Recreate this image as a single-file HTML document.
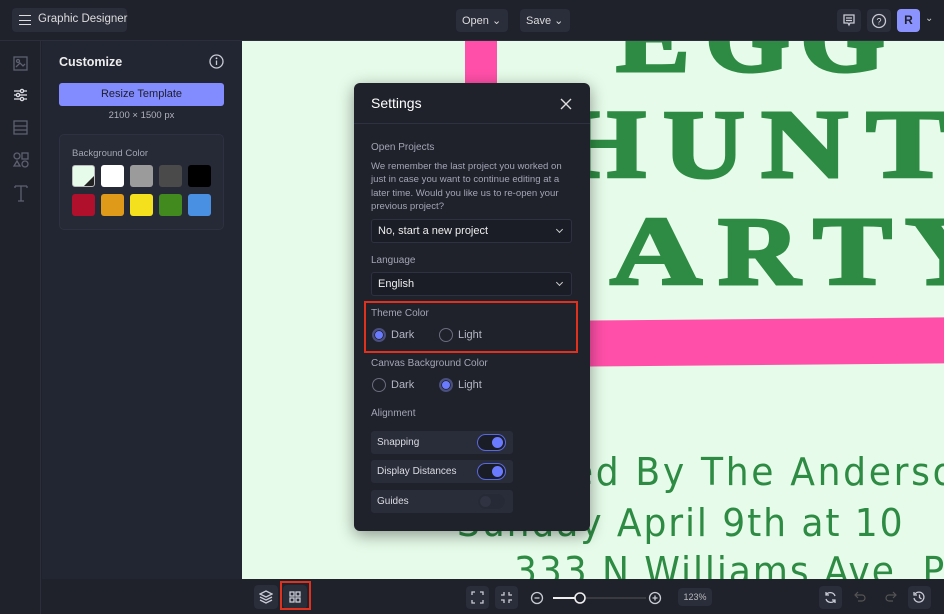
<!DOCTYPE html>
<html><head><style>
*{box-sizing:border-box;margin:0;padding:0}
body{width:944px;height:614px;overflow:hidden;background:#1f212b;font-family:"Liberation Sans",sans-serif;color:#e6e7ee;position:relative}
.abs{position:absolute}
.btn{position:absolute;background:#2a2d3a;border-radius:4px}
.top{left:0;top:0;width:944px;height:41px;background:#1f212b;border-bottom:1px solid #2c2f3b}
.canvas{left:242px;top:41px;width:702px;height:538px;background:#e6fbe9;overflow:hidden}
.hand{position:absolute;color:#2e8b43;font-family:"DejaVu Sans",sans-serif;font-size:38px;white-space:nowrap;letter-spacing:2px;transform:scaleX(0.95);transform-origin:left}
.modal{left:354px;top:83px;width:236px;height:448px;background:#1f212b;border-radius:6px;box-shadow:0 4px 16px rgba(0,0,0,.4)}
.lbl{position:absolute;font-size:10px;color:#a3a6b4}
.sel{position:absolute;left:17px;width:201px;height:24px;background:#1b1d26;border:1px solid #2e3140;border-radius:3px;font-size:11px;color:#eee;padding:5px 6px}
.sel:after{content:"";position:absolute;right:9px;top:7px;width:4px;height:4px;border-right:1.3px solid #ccc;border-bottom:1.3px solid #ccc;transform:rotate(45deg)}
.radio{position:absolute;width:14px;height:14px;border-radius:50%;border:1px solid #6a6d7c}
.radio.on{border:2px solid #4a4f7c;background:#6b7bff;box-shadow:inset 0 0 0 1px #1f212b}
.rt{position:absolute;font-size:11px;color:#b5b8c4}
.tog{position:absolute;left:17px;width:142px;height:23px;background:#292c39;border-radius:3px;font-size:10px;color:#dcdde3;padding:6px 6px}
.sw{position:absolute;right:7px;top:3px;width:29px;height:17px;border-radius:9px;background:#1b1d26;border:1.5px solid #5868e0}
.sw i{position:absolute;right:2px;top:2px;width:11px;height:11px;border-radius:50%;background:#6b7bff}
.sw.off{border-color:#2a2d3a;background:#262936}.sw.off i{left:2px;right:auto;background:#303341}
.sw2{stroke:#c9cbd4;fill:none;stroke-width:1.3}
</style></head><body>
<div class="abs top"></div>
<div class="btn" style="left:12px;top:8px;width:115px;height:24px"></div>
<div class="abs" style="left:19px;top:15px;width:12px;height:10px;border-top:1.5px solid #ddd;border-bottom:1.5px solid #ddd"></div>
<div class="abs" style="left:19px;top:19.5px;width:12px;border-top:1.5px solid #ddd"></div>
<div class="abs" style="left:38px;top:13px;font-size:11.5px;color:#ddd">Graphic Designer</div>
<div class="btn" style="left:456px;top:9px;width:52px;height:23px"></div>
<div class="abs" style="left:462px;top:14px;font-size:11px;color:#ddd">Open ⌄</div>
<div class="btn" style="left:520px;top:9px;width:50px;height:23px"></div>
<div class="abs" style="left:526px;top:14px;font-size:11px;color:#ddd">Save ⌄</div>
<div class="btn" style="left:837px;top:9px;width:24px;height:23px"></div>
<svg class="abs" style="left:843px;top:14px" width="12" height="13"><path class="sw2" d="M1 1h10v8H7l-1 2-1-2H1z M3 4h6M3 6.5h6"/></svg>
<div class="btn" style="left:867px;top:9px;width:24px;height:23px"></div>
<svg class="abs" style="left:871px;top:13px" width="16" height="16"><circle cx="8" cy="8" r="6.5" class="sw2"/><text x="8" y="11.5" font-size="9" fill="#ddd" text-anchor="middle" font-family="Liberation Sans">?</text></svg>
<div class="abs" style="left:897px;top:9px;width:23px;height:23px;background:#8b93ff;border-radius:4px;color:#1f212b;font-weight:bold;font-size:12px;text-align:center;line-height:23px">R</div>
<div class="abs" style="left:925px;top:13px;font-size:10px;color:#ccc">⌄</div>

<div class="abs" style="left:0;top:41px;width:41px;height:573px;background:#1f212b;border-right:1px solid #2c2f3b"></div>
<svg class="abs" style="left:12px;top:55px" width="18" height="160">
<g stroke="#5d6070" fill="none" stroke-width="1.3"><rect x="2" y="2" width="13" height="13"/><path d="M4 12l4-4 3 3 2-2"/><circle cx="6" cy="6" r="1.5"/>
<rect x="2" y="66" width="13" height="13"/><path d="M2 71h13M2 75h13"/>
<circle cx="5" cy="101" r="3"/><rect x="10" y="98" width="6" height="6"/><path d="M5 106l3 5H2z"/><circle cx="13" cy="109" r="3"/>
<path d="M3 131h12M9 131v15M6 146h6M3 131v2M15 131v2"/></g>
<g stroke="#e0e1e8" stroke-width="1.3" fill="none"><path d="M2 36h13M2 40h13M2 44h13"/><circle cx="10" cy="36" r="1.6" fill="#1f212b"/><circle cx="6" cy="40" r="1.6" fill="#1f212b"/><circle cx="10" cy="44" r="1.6" fill="#1f212b"/></g>
</svg>

<div class="abs" style="left:42px;top:41px;width:200px;height:538px;background:#222532"></div>
<div class="abs" style="left:59px;top:55px;font-size:12.5px;font-weight:bold;color:#eee">Customize</div>
<svg class="abs" style="left:209px;top:54px" width="15" height="15"><circle cx="7.5" cy="7.5" r="6.5" class="sw2"/><path d="M7.5 6.5v4.5" class="sw2"/><circle cx="7.5" cy="4.3" r="0.9" fill="#ddd"/></svg>
<div class="abs" style="left:59px;top:83px;width:165px;height:23px;background:#838cff;border-radius:3px;color:#1c1e2a;font-size:11px;text-align:center;line-height:23px">Resize Template</div>
<div class="abs" style="left:59px;top:110px;width:165px;text-align:center;font-size:9.5px;color:#b0b2bc">2100 × 1500 px</div>
<div class="abs" style="left:59px;top:134px;width:165px;height:96px;background:#262936;border:1px solid #2e3140;border-radius:5px"></div>
<div class="abs" style="left:72px;top:148px;font-size:9.5px;color:#a3a6b4">Background Color</div>
<div class="abs" style="left:72px;top:165px;width:23px;height:22px;background:#e6fbe9;border-radius:3px;border:1px solid #bbb;overflow:hidden"><div style="position:absolute;right:0;bottom:0;width:0;height:0;border-left:10px solid transparent;border-bottom:10px solid #222"></div></div>
<div class="abs" style="left:101px;top:165px;width:23px;height:22px;background:#fff;border-radius:3px"></div>
<div class="abs" style="left:130px;top:165px;width:23px;height:22px;background:#9b9b9b;border-radius:3px"></div>
<div class="abs" style="left:159px;top:165px;width:23px;height:22px;background:#4a4a4a;border-radius:3px"></div>
<div class="abs" style="left:188px;top:165px;width:23px;height:22px;background:#000;border-radius:3px"></div>
<div class="abs" style="left:72px;top:194px;width:23px;height:22px;background:#b0102c;border-radius:3px"></div>
<div class="abs" style="left:101px;top:194px;width:23px;height:22px;background:#e09a1a;border-radius:3px"></div>
<div class="abs" style="left:130px;top:194px;width:23px;height:22px;background:#f5e01e;border-radius:3px"></div>
<div class="abs" style="left:159px;top:194px;width:23px;height:22px;background:#438a1e;border-radius:3px"></div>
<div class="abs" style="left:188px;top:194px;width:23px;height:22px;background:#4a90e2;border-radius:3px"></div>

<div class="abs canvas">
<div class="abs" style="left:223px;top:0;width:32px;height:60px;background:#ff4fa8"></div>
<svg class="abs" style="left:0;top:0" width="702" height="538">
<g font-family="Liberation Serif, serif" font-weight="bold" font-size="98" fill="#2e8b43" stroke="#2e8b43" stroke-width="3">
<text x="374" y="30" textLength="74" lengthAdjust="spacingAndGlyphs">E</text><text x="463" y="30" textLength="85" lengthAdjust="spacingAndGlyphs">G</text><text x="558" y="30" textLength="85" lengthAdjust="spacingAndGlyphs">G</text>
<text x="319" y="136" textLength="85" lengthAdjust="spacingAndGlyphs">H</text><text x="421" y="136" textLength="82" lengthAdjust="spacingAndGlyphs">U</text><text x="519" y="136" textLength="87" lengthAdjust="spacingAndGlyphs">N</text><text x="624" y="136" textLength="84" lengthAdjust="spacingAndGlyphs">T</text>
<text x="250" y="243" textLength="80" lengthAdjust="spacingAndGlyphs">P</text><text x="368" y="243" textLength="92" lengthAdjust="spacingAndGlyphs">A</text><text x="476" y="243" textLength="82" lengthAdjust="spacingAndGlyphs">R</text><text x="571" y="243" textLength="79" lengthAdjust="spacingAndGlyphs">T</text><text x="663" y="243" textLength="90" lengthAdjust="spacingAndGlyphs">Y</text>
</g></svg>
<div class="abs" style="left:318px;top:278px;width:400px;height:46px;background:#ff4fa8;transform:skewY(-0.5deg)"></div>
<div class="hand" style="left:236px;top:409px;letter-spacing:2.8px">Hosted By The Andersons</div>
<div class="hand" style="left:215px;top:460px">Sunday April 9th at 10</div>
<div class="hand" style="left:272px;top:508px">333 N Williams Ave, Portland</div>
</div>

<div class="abs modal">
<div class="abs" style="left:17px;top:12px;font-size:14px;color:#fff">Settings</div>
<svg class="abs" style="left:206px;top:15px" width="12" height="12"><path d="M1 1l10 10M11 1L1 11" stroke="#ddd" stroke-width="1.4"/></svg>
<div class="abs" style="left:0;top:40px;width:236px;border-top:1px solid #2e3140"></div>
<div class="lbl" style="left:17px;top:59px">Open Projects</div>
<div class="lbl" style="left:17px;top:77px;width:204px;font-size:9.6px;line-height:13.3px">We remember the last project you worked on just in case you want to continue editing at a later time. Would you like us to re-open your previous project?</div>
<div class="sel" style="top:136px">No, start a new project</div>
<div class="lbl" style="left:17px;top:172px">Language</div>
<div class="sel" style="top:189px">English</div>
<div class="lbl" style="left:17px;top:225px">Theme Color</div>
<div class="radio on" style="left:18px;top:245px"></div><div class="rt" style="left:37px;top:246px">Dark</div>
<div class="radio" style="left:85px;top:245px"></div><div class="rt" style="left:104px;top:246px">Light</div>
<div class="abs" style="left:10px;top:218px;width:214px;height:52px;border:2px solid #e0301e"></div>
<div class="lbl" style="left:17px;top:275px">Canvas Background Color</div>
<div class="radio" style="left:18px;top:295px"></div><div class="rt" style="left:37px;top:296px">Dark</div>
<div class="radio on" style="left:85px;top:295px"></div><div class="rt" style="left:104px;top:296px">Light</div>
<div class="lbl" style="left:17px;top:325px">Alignment</div>
<div class="tog" style="top:348px">Snapping<div class="sw"><i></i></div></div>
<div class="tog" style="top:377px">Display Distances<div class="sw"><i></i></div></div>
<div class="tog" style="top:407px">Guides<div class="sw off"><i></i></div></div>
</div>

<div class="abs" style="left:242px;top:579px;width:702px;height:35px;background:#1f212b"></div>
<div class="btn" style="left:254px;top:585px;width:24px;height:24px"></div>
<svg class="abs" style="left:259px;top:590px" width="14" height="14"><path class="sw2" d="M7 1l6 3-6 3-6-3z M1 7l6 3 6-3 M1 10l6 3 6-3"/></svg>
<div class="btn" style="left:283px;top:585px;width:24px;height:24px"></div>
<svg class="abs" style="left:289px;top:591px" width="12" height="12"><g class="sw2"><rect x="1" y="1" width="4" height="4"/><rect x="7" y="1" width="4" height="4"/><rect x="1" y="7" width="4" height="4"/><rect x="7" y="7" width="4" height="4"/></g></svg>
<div class="abs" style="left:280px;top:581px;width:31px;height:29px;border:2px solid #e0301e"></div>
<div class="btn" style="left:466px;top:586px;width:23px;height:23px"></div>
<svg class="abs" style="left:471px;top:591px" width="13" height="13"><path class="sw2" d="M1 4V1h3M9 1h3v3M12 9v3H9M4 12H1V9"/></svg>
<div class="btn" style="left:495px;top:586px;width:23px;height:23px"></div>
<svg class="abs" style="left:500px;top:591px" width="13" height="13"><path class="sw2" d="M4 1v3H1M9 1v3h3M12 9H9v3M1 9h3v3"/></svg>
<svg class="abs" style="left:530px;top:590px" width="120" height="16"><circle cx="7" cy="8" r="5.5" class="sw2"/><path d="M4.5 8h5" class="sw2"/><path d="M23 8h27" stroke="#eee" stroke-width="2"/><path d="M56 8h60" stroke="#555" stroke-width="1"/><circle cx="50" cy="8" r="5" fill="#1f212b" stroke="#eee" stroke-width="1.6"/></svg>
<svg class="abs" style="left:648px;top:590px" width="16" height="16"><circle cx="7" cy="8" r="5.5" class="sw2"/><path d="M4.5 8h5M7 5.5v5" class="sw2"/></svg>
<div class="btn" style="left:678px;top:588px;width:34px;height:18px;font-size:9px;color:#bbb;text-align:center;line-height:18px">123%</div>
<div class="btn" style="left:819px;top:586px;width:23px;height:23px"></div>
<svg class="abs" style="left:823px;top:590px" width="15" height="15"><path class="sw2" d="M12 6a5 5 0 0 0-9-1M3 9a5 5 0 0 0 9 1M3 2v3h3M12 13v-3H9"/></svg>
<svg class="abs" style="left:853px;top:590px" width="60" height="15"><path d="M3 5h6a3 3 0 0 1 0 6H5M5 2L2 5l3 3" stroke="#555" fill="none" stroke-width="1.2"/><path d="M42 5h-6a3 3 0 0 0 0 6h4M40 2l3 3-3 3" stroke="#555" fill="none" stroke-width="1.2"/></svg>
<div class="btn" style="left:908px;top:586px;width:23px;height:23px"></div>
<svg class="abs" style="left:912px;top:590px" width="15" height="15"><path class="sw2" d="M3 4a5 5 0 1 1-1 4M2 2v3h3M7.5 4.5v3l2 1.5"/></svg>
</body></html>
